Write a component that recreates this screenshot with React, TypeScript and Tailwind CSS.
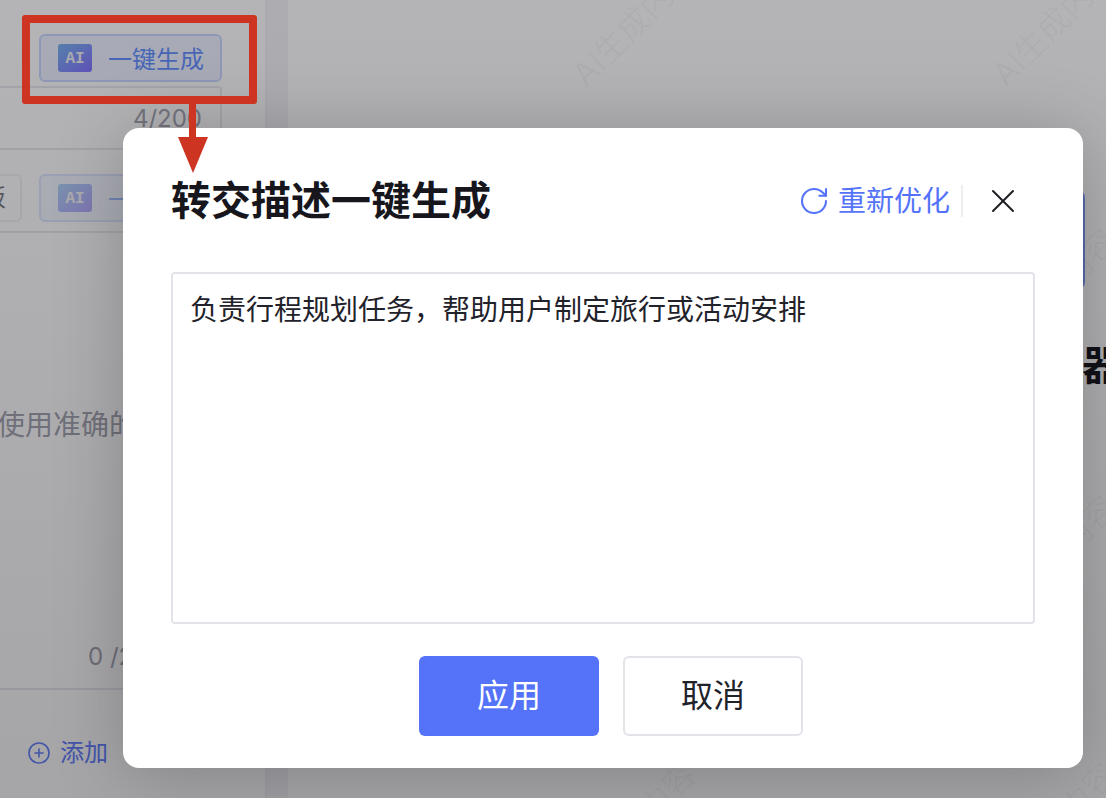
import { RotateCw, X, CirclePlus } from "lucide-react";

const fontStack = "[font-family:Inter,'Noto_Sans_CJK_SC',sans-serif]";

const AiButton = ({ faded }: { faded?: boolean }) => (
  <div
    className={`flex h-[48px] w-[183px] shrink-0 items-center rounded-[6px] border-2 border-[#c9d6ff] bg-[#eef2ff] pl-[17px] ${
      faded ? "opacity-60" : ""
    }`}
  >
    <div className="flex h-[28px] w-[34px] items-center justify-center rounded-[3px] bg-gradient-to-br from-[#78b4f0] to-[#8470ff] pt-[1px] text-[16px] font-bold text-[#f0f0f4] [font-family:'Liberation_Mono',monospace]">
      AI
    </div>
    <span className="ml-[16px] mt-[3px] whitespace-nowrap text-[24px] leading-none text-[#6590ff]">
      一键生成
    </span>
  </div>
);

const Sidebar = () => (
  <aside className="flex w-[265px] shrink-0 flex-col overflow-hidden pt-[34px]">
    <div className="flex justify-end pr-[43px]">
      <AiButton />
    </div>
    <div className="-ml-[20px] mr-[43px] mt-[4px] flex h-[64px] items-center justify-end rounded-[4px] border-2 border-[#e8e8ee] pr-[18px] pt-[2px] text-[24px] text-[#a4a4b0]">
      4/200
    </div>
    <div className="mt-[24px] flex gap-[17px] pr-[43px]">
      <div className="-ml-[60px] flex h-[48px] w-[82px] shrink-0 items-center justify-end rounded-[6px] border-2 border-[#e8e8ee] pr-[14px] text-[24px] text-[#22222a] opacity-60">
        模板
      </div>
      <AiButton faded />
    </div>
    <div className="mt-[9px] h-[2px] bg-[#e8e8ee]" />
    <p className="-ml-[3px] mt-[176px] whitespace-nowrap text-[28px] leading-[32px] text-[#a4a4b0]">
      使用准确的描述
    </p>
    <p className="ml-[88px] mt-[200px] whitespace-nowrap text-[24px] leading-[32px] text-[#a4a4b0]">
      0 /200
    </p>
    <div className="mt-[15px] h-[2px] bg-[#e8e8ee]" />
    <div className="ml-[27px] mt-[47px] flex items-center gap-[9px] text-[24px] leading-[32px] text-[#6580ff]">
      <CirclePlus size={24} strokeWidth={1.6} />
      <span>添加</span>
    </div>
  </aside>
);

const Main = () => (
  <main className="relative flex min-w-0 flex-1 flex-col overflow-hidden pt-[190px]">
    <div className="pointer-events-none absolute inset-x-0 -top-[110px] grid grid-cols-[repeat(2,420px)] auto-rows-[267px] items-center justify-items-center pl-[136px]">
      {Array.from({ length: 8 }).map((_, i) => (
        <span
          key={i}
          className="-rotate-45 whitespace-nowrap text-[32px] leading-none text-black/[0.04]"
        >
          AI生成内容
        </span>
      ))}
    </div>
    <div className="ml-[597px] h-[100px] w-[200px] rounded-[8px] bg-[#8096f8]" />
    <h2 className="ml-[794px] mt-[51px] text-[40px] font-bold leading-[50px] text-[#16161c]">
      器
    </h2>
  </main>
);

const Modal = () => (
  <div className="absolute left-[123px] top-[128px] flex h-[640px] w-[960px] flex-col rounded-[16px] bg-white px-[48px] pb-[32px] pt-[48px] shadow-[0_6px_70px_rgba(0,0,0,0.22)]">
    <header className="flex h-[50px] items-center justify-between pr-[12px]">
      <h1 className="text-[40px] font-bold leading-[50px] text-[#16161c]">
        转交描述一键生成
      </h1>
      <div className="flex items-center">
        <RotateCw size={32} strokeWidth={1.55} className="text-[#5473f8]" />
        <span className="ml-[8px] text-[28px] leading-[36px] text-[#5473f8]">
          重新优化
        </span>
        <div className="ml-[11px] mr-[20px] h-[32px] w-[2px] bg-[#eeeef2]" />
        <X size={40} strokeWidth={1.2} className="text-[#1c1c22]" />
      </div>
    </header>
    <div className="mt-[46px] h-[352px] rounded-[4px] border-2 border-[#e3e3ea] px-[17px] py-[16px] text-[28px] leading-[40px] text-[#22222a]">
      负责行程规划任务，帮助用户制定旅行或活动安排
    </div>
    <footer className="mt-[32px] flex justify-center gap-[24px] pl-[16px]">
      <button className="h-[80px] w-[180px] rounded-[6px] bg-[#5473f8] text-[32px] text-white">
        应用
      </button>
      <button className="h-[80px] w-[180px] rounded-[6px] border-2 border-[#e3e3ea] bg-white text-[32px] text-[#22222a]">
        取消
      </button>
    </footer>
  </div>
);

const Annotation = () => (
  <>
    <div className="absolute left-[22px] top-[15px] h-[89px] w-[235px] rounded-[3px] border-[8px] border-[#cd3522]" />
    <svg
      className="absolute left-[170px] top-[100px]"
      width="46"
      height="76"
      viewBox="0 0 46 76"
    >
      <rect x="19" y="0" width="7" height="40" fill="#cd3522" />
      <path d="M8 37 L38 37 L23 73 Z" fill="#cd3522" />
    </svg>
  </>
);

export default function App() {
  return (
    <div
      className={`relative flex h-[798px] w-[1106px] overflow-hidden bg-white ${fontStack}`}
    >
      <Sidebar />
      <div className="w-[23px] shrink-0 border-l-2 border-[#f0f0f3] bg-[#f4f4f7]" />
      <Main />
      {/* dim layer */}
      <div className="absolute inset-0 bg-gradient-to-b from-[#06060e]/30 to-[#06060e]/[0.36]" />
      <Modal />
      <Annotation />
    </div>
  );
}
